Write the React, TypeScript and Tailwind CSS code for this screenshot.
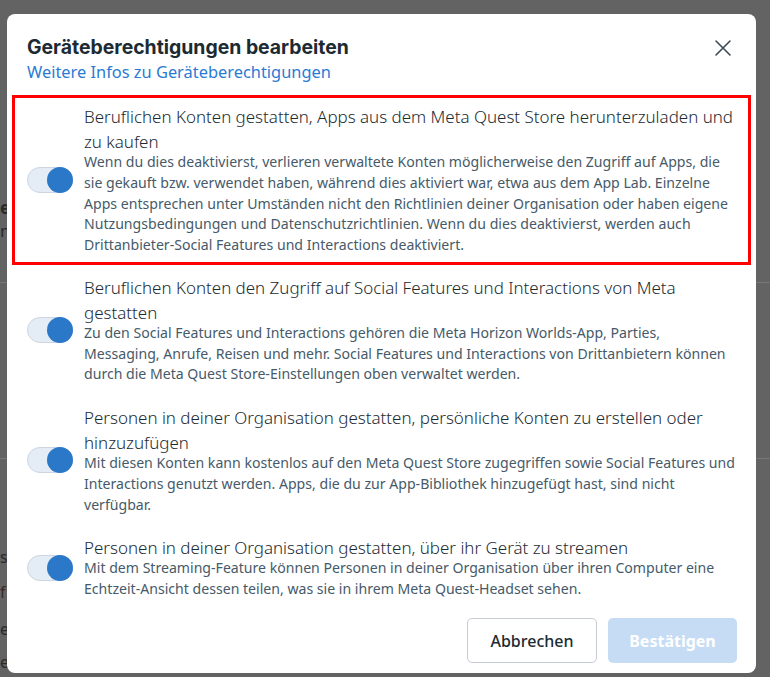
import React from "react";

const sections = [
  {
    title:
      "Beruflichen Konten gestatten, Apps aus dem Meta Quest Store herunterzuladen und zu kaufen",
    desc:
      "Wenn du dies deaktivierst, verlieren verwaltete Konten möglicherweise den Zugriff auf Apps, die sie gekauft bzw. verwendet haben, während dies aktiviert war, etwa aus dem App Lab. Einzelne Apps entsprechen unter Umständen nicht den Richtlinien deiner Organisation oder haben eigene Nutzungsbedingungen und Datenschutzrichtlinien. Wenn du dies deaktivierst, werden auch Drittanbieter-Social Features und Interactions deaktiviert.",
    highlight: true,
  },
  {
    title:
      "Beruflichen Konten den Zugriff auf Social Features und Interactions von Meta gestatten",
    desc:
      "Zu den Social Features und Interactions gehören die Meta Horizon Worlds-App, Parties, Messaging, Anrufe, Reisen und mehr. Social Features und Interactions von Drittanbietern können durch die Meta Quest Store-Einstellungen oben verwaltet werden.",
  },
  {
    title:
      "Personen in deiner Organisation gestatten, persönliche Konten zu erstellen oder hinzuzufügen",
    desc:
      "Mit diesen Konten kann kostenlos auf den Meta Quest Store zugegriffen sowie Social Features und Interactions genutzt werden. Apps, die du zur App-Bibliothek hinzugefügt hast, sind nicht verfügbar.",
  },
  {
    title: "Personen in deiner Organisation gestatten, über ihr Gerät zu streamen",
    desc:
      "Mit dem Streaming-Feature können Personen in deiner Organisation über ihren Computer eine Echtzeit-Ansicht dessen teilen, was sie in ihrem Meta Quest-Headset sehen.",
  },
];

function Toggle() {
  return (
    <div className="relative w-[46px] h-[26px] shrink-0">
      <div className="absolute inset-0 rounded-full bg-[#e4ecf5] border border-[#cdd6e0]" />
      <div className="absolute right-0 top-0 w-[26px] h-[26px] rounded-full bg-[#2b78c9]" />
    </div>
  );
}

export default function App() {
  return (
    <div
      className="relative w-[770px] h-[677px] overflow-hidden bg-[#636363]"
      style={{ fontFamily: '"Noto Sans", "Open Sans", sans-serif' }}
    >
      {/* faint background page */}
      <div className="absolute left-0 right-0 top-[282px] h-px bg-[#777]" />
      <div className="absolute left-0 right-0 top-[458px] h-px bg-[#777]" />
      <div className="absolute left-0 top-[195px] text-[17px] font-bold text-[#2a2a2a]">e</div>
      <div className="absolute left-0 top-[218px] text-[17px] text-[#2a2a2a]">n</div>
      <div className="absolute left-0 top-[545px] text-[16px] text-[#2a2a2a]">s</div>
      <div className="absolute left-0 top-[580px] text-[16px] text-[#3a2a2a]">f</div>
      <div className="absolute left-0 top-[617px] text-[16px] text-[#2a2a2a]">e</div>
      <div className="absolute left-0 top-[650px] text-[16px] text-[#2a2a2a]">e</div>

      {/* dialog */}
      <div className="absolute left-[7px] top-[14px] w-[749px] h-[659px] bg-white rounded-[8px] flex flex-col">
        <div className="flex items-start justify-between pl-[20px] pr-[24px] pt-[20px]">
          <div className="flex flex-col">
            <h1
              className="text-[19.4px] leading-[26px] font-bold text-[#1c2b33]"
              style={{ fontFamily: '"Inter", "Noto Sans", sans-serif' }}
            >
              Geräteberechtigungen bearbeiten
            </h1>
            <a className="text-[16.4px] leading-[24px] text-[#2a7bd3]">
              Weitere Infos zu Geräteberechtigungen
            </a>
          </div>
          <svg width="18" height="18" viewBox="0 0 18 18" className="mt-[5px]">
            <path d="M2 2 L16 16 M16 2 L2 16" stroke="#3d4a54" strokeWidth="1.6" strokeLinecap="round" />
          </svg>
        </div>

        <div className="flex flex-col mt-[11px] px-[5px]">
          {sections.map((s, i) => (
            <div
              key={i}
              className={
                s.highlight
                  ? "flex items-center gap-[11px] border-[3px] border-[#ff0000] pl-[12px] pr-[12px] pt-[6px] pb-[6px]"
                  : "flex items-center gap-[11px] pl-[15px] pr-[15px] pt-[10px] pb-[10px]"
              }
            >
              <Toggle />
              <div className="flex flex-col">
                <div className="text-[16.95px] leading-[25px] text-[#1c2b33] font-light">{s.title}</div>
                <div className="text-[14.1px] leading-[20.75px] mt-[-2px] text-[#465a69]">{s.desc}</div>
              </div>
            </div>
          ))}
        </div>

        <div className="mt-auto flex justify-end gap-[11px] pr-[19px] pb-[10px]">
          <button className="w-[130px] h-[45px] rounded-[5px] border border-[#c6ccd2] text-[16px] font-medium text-[#1c2b33]">
            Abbrechen
          </button>
          <button className="w-[129px] h-[45px] rounded-[5px] bg-[#c6dcf5] text-[16px] font-bold text-white">
            Bestätigen
          </button>
        </div>
      </div>
    </div>
  );
}
